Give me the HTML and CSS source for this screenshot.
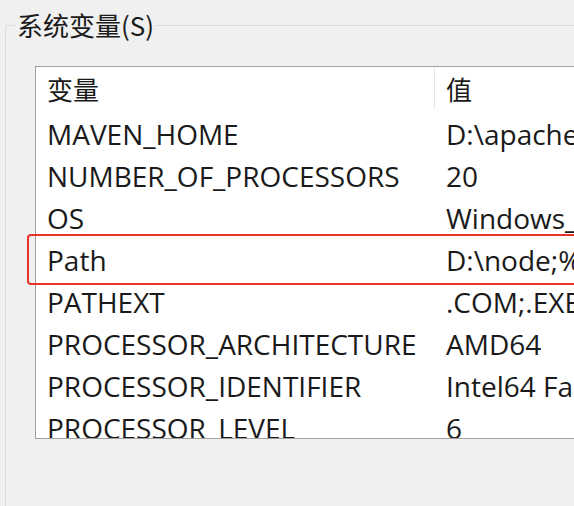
FILE: index.html
```html
<!DOCTYPE html>
<html lang="zh-CN">

<head>
  <meta charset="UTF-8">
  <meta name="viewport" content="width=device-width, initial-scale=1.0">
  <title>系统变量</title>
  <link rel="stylesheet" href="styles.css">
</head>

<body>
  <fieldset class="group">
    <legend>系统变量(S)</legend>

    <div class="listbox">
      <div class="rows">
        <div class="row head">
          <span class="name">变量</span>
          <span class="value">值</span>
        </div>
        <div class="row"><span class="name">MAVEN_HOME</span><span class="value">D:\apache-maven-3.6.3</span></div>
        <div class="row"><span class="name">NUMBER_OF_PROCESSORS</span><span class="value">20</span></div>
        <div class="row"><span class="name">OS</span><span class="value">Windows_NT</span></div>
        <div class="row"><span class="name">Path</span><span class="value">D:\node;%JAVA_HOME%\bin</span></div>
        <div class="row"><span class="name">PATHEXT</span><span class="value">.COM;.EXE;.BAT;.CMD</span></div>
        <div class="row"><span class="name">PROCESSOR_ARCHITECTURE</span><span class="value">AMD64</span></div>
        <div class="row"><span class="name">PROCESSOR_IDENTIFIER</span><span class="value">Intel64 Family 6</span></div>
        <div class="row"><span class="name">PROCESSOR_LEVEL</span><span class="value">6</span></div>
      </div>
      <!-- 标注框 -->
      <div class="mark"></div>
    </div>
  </fieldset>
</body>

</html>
```

FILE: styles.css
```css
* {
  margin: 0;
  padding: 0;
  box-sizing: border-box;
}

html,
body {
  height: 100%;
  overflow: hidden;
}

body {
  background-color: #f0f0f0;
  color: #1a1a1a;
  font-family: "Open Sans", "Noto Sans CJK SC", sans-serif;
}

.group {
  width: 700px;
  height: 600px;
  margin: 8px 0 0 5px;
  padding: 24px 0 0 29px;
  border: 1px solid #dcdcdc;
}

.group legend {
  margin-left: -20px;
  padding: 0 2px;
  font-family: "Noto Sans CJK SC", sans-serif;
  font-size: 26px;
  line-height: 34px;
  color: #1a1a1a;
}

.listbox {
  position: relative;
  width: 700px;
  border: 1px solid #a0a0a0;
  background-color: #fff;
}

.rows {
  height: 371px;
  overflow: hidden;
}

.row {
  display: flex;
  height: 42px;
  align-items: center;
  font-size: 28px;
  white-space: nowrap;
}

.row .name {
  flex: none;
  width: 399px;
  padding-left: 11px;
  overflow: hidden;
}

.row .value {
  flex: none;
  padding-left: 11px;
}

.row.head {
  height: 46px;
  padding-bottom: 4px;
  font-family: "Noto Sans CJK SC", sans-serif;
  font-size: 26px;
}

.row.head .name {
  height: 100%;
  display: flex;
  align-items: center;
  border-right: 1px solid #e5e5e5;
}

.mark {
  position: absolute;
  top: 167px;
  left: -9px;
  width: 620px;
  height: 51px;
  border: 2px solid #e8312a;
  border-radius: 4px;
}
```
